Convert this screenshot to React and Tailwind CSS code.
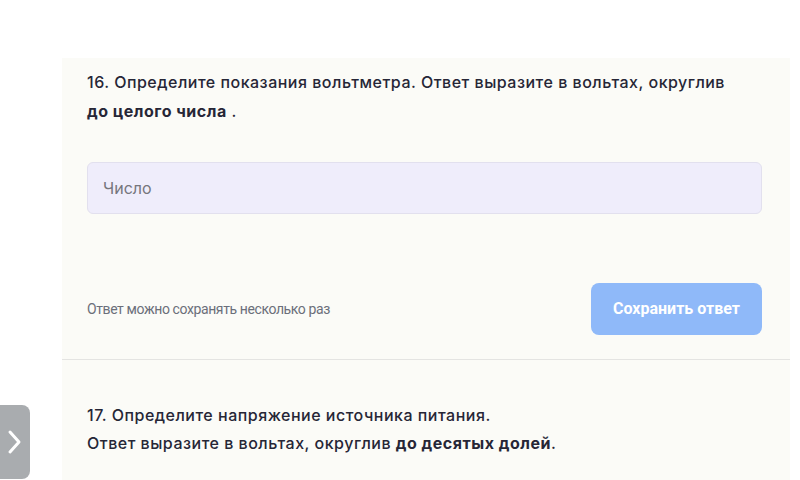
const Chevron = () => (
  <svg width="16" height="26" viewBox="0 0 16 26" fill="none">
    <path d="M3 3l9 10-9 10" stroke="white" strokeWidth="3" strokeLinecap="round" strokeLinejoin="round" />
  </svg>
);

export default function App() {
  return (
    <div className="relative w-[800px] h-[480px] overflow-hidden bg-white" style={{ fontFamily: "Inter, 'Noto Sans', sans-serif" }}>
      <div className="ml-[62px] mt-[58px] w-[728px] bg-[#fbfbf7]">
        <div className="pl-[25px] pr-[28px] pt-[10px]">
          <p className="max-w-[645px] text-[16px] leading-[29px] font-medium text-[#262636] tracking-[0.5px]">
            16. Определите показания вольтметра. Ответ выразите в вольтах, округлив{" "}
            <span className="font-bold">до целого числа</span> .
          </p>
          <input
            className="mt-[36px] w-full h-[52px] rounded-md border border-[#e2e0ee] bg-[#efedfb] px-[15px] text-[16px] outline-none placeholder:text-[#76767c]"
            placeholder="Число"
          />
          <div className="mt-[69px] flex items-center justify-between">
            <span className="text-[14px] text-[#6b6f7a] tracking-[-0.4px]" style={{ fontFamily: "Roboto, sans-serif" }}>
              Ответ можно сохранять несколько раз
            </span>
            <button
              className="w-[171px] h-[52px] rounded-lg bg-[#8fb9f9] text-white text-[16px] font-bold"
              style={{ fontFamily: "Roboto, sans-serif" }}
            >
              Сохранить ответ
            </button>
          </div>
        </div>
        <div className="mt-[24px] border-t border-[#e4e4e2]" />
        <div className="pl-[25px] pr-[28px] pt-[41px] pb-[30px]">
          <p className="text-[16px] leading-[28px] font-medium text-[#262636] tracking-[0.5px]">
            17. Определите напряжение источника питания.
            <br />
            Ответ выразите в вольтах, округлив <span className="font-bold">до десятых долей</span>.
          </p>
        </div>
      </div>
      <div className="absolute left-0 top-[405px] w-[30px] h-[74px] rounded-r-lg bg-[#a9acaf] flex items-center justify-center">
        <Chevron />
      </div>
    </div>
  );
}
